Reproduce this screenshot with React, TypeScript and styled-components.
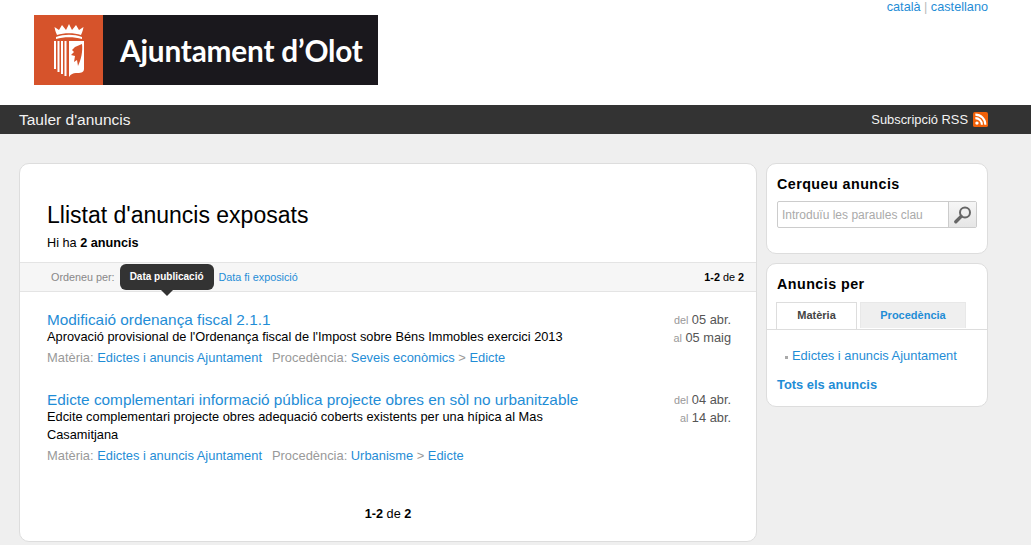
import React from 'react';
import styled, { createGlobalStyle } from 'styled-components';

const GlobalStyle = createGlobalStyle`
  html, body {
    margin: 0;
    padding: 0;
    background: #efefef;
    font-family: "Liberation Sans", Arial, sans-serif;
    font-size: 12px;
    color: #000;
    overflow: hidden;
  }
  a { color: #1f8dd6; text-decoration: none; }
`;

const announcements = [
  {
    title: 'Modificaió ordenança fiscal 2.1.1',
    text: "Aprovació provisional de l'Ordenança fiscal de l'Impost sobre Béns Immobles exercici 2013",
    from: '05 abr.',
    to: '05 maig',
    origin: ['Seveis econòmics', 'Edicte'],
  },
  {
    title: 'Edicte complementari informació pública projecte obres en sòl no urbanitzable',
    text: 'Edcite complementari projecte obres adequació coberts existents per una hípica al Mas Casamitjana',
    from: '04 abr.',
    to: '14 abr.',
    origin: ['Urbanisme', 'Edicte'],
  },
];

const Crest = () => (
  <svg width="32" height="54" viewBox="0 0 32 54" fill="#fff">
    <path d="M4 12C2 8 2 6 1.5 4L6 7l3-5 4 5 3-6 3 6 4-5 3 5 4.500-3C30 6 30 8 28 12 21 9.500 11 9.500 4 12z" />
    <path d="M3 14c8-3 18-3 26 0v2c-8-2.500-18-2.500-26 0z" />
    <path d="M1 18h2v28H1zM4.500 18h2v31h-2zM8 18h2v33H8zM11.500 18h2v35h-2z" />
    <path
      fillRule="evenodd"
      d="M16 18h15v28c0 4-4 4-8 4-3 0-5 1-7 4zM22 24l7-3c1 7-1 16-4 22l-1-6-3 2 1-6-4-1 3-3-2-2z"
    />
  </svg>
);

const App = () => (
  <>
    <GlobalStyle />
    <Header>
      <Logo>
        <LogoMark>
          <Crest />
        </LogoMark>
        <LogoName>Ajuntament d’Olot</LogoName>
      </Logo>
      <Languages>
        <a href="#ca">català</a>
        <LangSep>|</LangSep>
        <a href="#es">castellano</a>
      </Languages>
    </Header>

    <NavBar>
      <NavTitle>Tauler d'anuncis</NavTitle>
      <RssLink>
        Subscripció RSS
        <RssIcon viewBox="0 0 16 16">
          <rect width="16" height="16" rx="2" fill="#f26109" />
          <circle cx="4.2" cy="11.8" r="1.8" fill="#fff" />
          <path d="M2.5 6.5a7 7 0 0 1 7 7M2.5 2.8a10.7 10.7 0 0 1 10.7 10.7" fill="none" stroke="#fff" strokeWidth="2.2" />
        </RssIcon>
      </RssLink>
    </NavBar>

    <Page>
      <MainCard>
        <Intro>
          <PageTitle>Llistat d'anuncis exposats</PageTitle>
          <Count>
            Hi ha <b>2 anuncis</b>
          </Count>
        </Intro>

        <SortBar>
          <SortLabel>Ordeneu per:</SortLabel>
          <ActiveSort>Data publicació</ActiveSort>
          <SortLink href="#fi">Data fi exposició</SortLink>
          <SortPages>
            <b>1-2</b> de <b>2</b>
          </SortPages>
        </SortBar>

        <List>
          {announcements.map(item => (
            <Item key={item.title}>
              <ItemBody>
                <ItemTitle href="#item">{item.title}</ItemTitle>
                <ItemText>{item.text}</ItemText>
                <ItemMeta>
                  <MetaGroup>
                    Matèria: <a href="#m">Edictes i anuncis Ajuntament</a>
                  </MetaGroup>
                  <MetaGroup>
                    Procedència: <a href="#p">{item.origin[0]}</a> &gt; <a href="#p">{item.origin[1]}</a>
                  </MetaGroup>
                </ItemMeta>
              </ItemBody>
              <Dates>
                <DateRow>
                  <small>del</small> {item.from}
                </DateRow>
                <DateRow>
                  <small>al</small> {item.to}
                </DateRow>
              </Dates>
            </Item>
          ))}
        </List>

        <Pager>
          <b>1-2</b> de <b>2</b>
        </Pager>
      </MainCard>

      <Sidebar>
        <SearchCard>
          <SideTitle>Cerqueu anuncis</SideTitle>
          <SearchBox>
            <SearchInput placeholder="Introduïu les paraules clau" />
            <SearchButton>
              <svg width="20" height="20" viewBox="0 0 20 20">
                <circle cx="12" cy="7.6" r="5" fill="none" stroke="#666" strokeWidth="2" />
                <path d="M8.2 11.4L2.8 16.8" stroke="#666" strokeWidth="3.4" strokeLinecap="round" />
              </svg>
            </SearchButton>
          </SearchBox>
        </SearchCard>

        <TopicsCard>
          <TopicsHeading>
            <SideTitle>Anuncis per</SideTitle>
          </TopicsHeading>
          <Tabs>
            <Tab $active>Matèria</Tab>
            <Tab>Procedència</Tab>
          </Tabs>
          <TopicList>
            <TopicItem>
              <a href="#m">Edictes i anuncis Ajuntament</a>
            </TopicItem>
          </TopicList>
          <AllLink href="#all">Tots els anuncis</AllLink>
        </TopicsCard>
      </Sidebar>
    </Page>
  </>
);

const Header = styled.header`
  height: 105px;
  background: #fff;
  display: flex;
  justify-content: space-between;
  align-items: flex-start;
  padding: 0 43px 0 34px;
  box-sizing: border-box;
`;

const Logo = styled.div`
  width: 344px;
  height: 70px;
  margin-top: 15px;
  display: flex;
  background: #1a181d;
`;

const LogoMark = styled.div`
  width: 69px;
  background: #d6532b;
  display: flex;
  align-items: center;
  justify-content: center;
`;

const LogoName = styled.div`
  margin-left: 17px;
  align-self: center;
  color: #fff;
  font-family: Lato, sans-serif;
  font-weight: 700;
  font-size: 31px;
  letter-spacing: -0.2px;
  white-space: nowrap;
  transform: scaleX(0.96);
  transform-origin: left center;
`;

const Languages = styled.div`
  font-size: 12.7px;
  line-height: 14px;
  color: #bbb;
`;

const LangSep = styled.span`
  margin: 0 3.5px;
`;

const NavBar = styled.nav`
  height: 29px;
  background: #333;
  color: #fff;
  display: flex;
  align-items: center;
  justify-content: space-between;
  padding: 0 43px 0 19px;
`;

const NavTitle = styled.div`
  font-size: 15.5px;
  color: #f2f2f2;
`;

const RssLink = styled.div`
  display: flex;
  align-items: center;
  gap: 5px;
  font-size: 12.9px;
  color: #f2f2f2;
`;

const RssIcon = styled.svg`
  width: 15px;
  height: 15px;
`;

const Page = styled.div`
  display: flex;
  align-items: flex-start;
  gap: 9px;
  padding: 29px 0 0 19px;
`;

const Card = styled.section`
  background: #fff;
  border: 1px solid #ddd;
  border-radius: 10px;
  box-sizing: border-box;
`;

const MainCard = styled(Card)`
  width: 738px;
  height: 379px;
  display: flex;
  flex-direction: column;
`;

const Intro = styled.div`
  padding: 38px 27px 0;
  height: 98px;
  box-sizing: border-box;
`;

const PageTitle = styled.h1`
  margin: 0;
  font-size: 23px;
  font-weight: normal;
  line-height: 26px;
`;

const Count = styled.p`
  margin: 8px 0 0;
  font-size: 12.7px;
  line-height: 14px;
`;

const SortBar = styled.div`
  height: 30px;
  box-sizing: border-box;
  background: #f6f6f6;
  border-top: 1px solid #e4e4e4;
  border-bottom: 1px solid #e4e4e4;
  padding: 0 12px 0 31px;
  display: flex;
  align-items: center;
  font-size: 10.8px;
`;

const SortLabel = styled.span`
  color: #888;
  margin-right: 5px;
`;

const ActiveSort = styled.span`
  position: relative;
  background: #333;
  color: #fff;
  font-weight: bold;
  height: 26px;
  line-height: 26px;
  padding: 0 10px;
  border-radius: 6px;
  margin-right: 5px;
  font-size: 10px;

  &::after {
    content: '';
    position: absolute;
    left: 41px;
    bottom: -6px;
    border-left: 6px solid transparent;
    border-right: 6px solid transparent;
    border-top: 6px solid #333;
  }
`;

const SortLink = styled.a``;

const SortPages = styled.span`
  margin-left: auto;
`;

const List = styled.div`
  padding: 19px 25px 0 27px;
  display: flex;
  flex-direction: column;
  gap: 25px;
`;

const Item = styled.article`
  display: flex;
  justify-content: space-between;
`;

const ItemBody = styled.div`
  width: 540px;
`;

const ItemTitle = styled.a`
  display: block;
  font-size: 15.35px;
  line-height: 17px;
  white-space: nowrap;
`;

const ItemText = styled.p`
  margin: 0;
  font-size: 12.8px;
  line-height: 18px;
`;

const ItemMeta = styled.div`
  margin-top: 3px;
  color: #999;
  font-size: 12.9px;
  line-height: 17px;
  display: flex;
  gap: 10px;
`;

const MetaGroup = styled.span``;

const Dates = styled.div`
  text-align: right;
  font-size: 12.8px;
  color: #555;
  line-height: 18px;
`;

const DateRow = styled.div`
  small {
    font-size: 10.8px;
    color: #999;
  }
`;

const Pager = styled.div`
  margin-top: auto;
  padding-bottom: 20px;
  text-align: center;
  font-size: 12.7px;
`;

const Sidebar = styled.aside`
  width: 222px;
  display: flex;
  flex-direction: column;
  gap: 9px;
`;

const SearchCard = styled(Card)`
  height: 91px;
  padding: 11px 10px 0;
`;

const SideTitle = styled.h2`
  margin: 0;
  font-size: 14.3px;
  line-height: 18px;
  letter-spacing: 0.45px;
  font-weight: bold;
`;

const TopicsHeading = styled.div`
  padding: 0 10px;
`;

const SearchBox = styled.div`
  margin-top: 8px;
  height: 27px;
  display: flex;
  border: 1px solid #ccc;
  border-radius: 2px;
  box-sizing: border-box;
`;

const SearchInput = styled.input`
  flex: 1;
  min-width: 0;
  border: 0;
  outline: 0;
  padding: 0 4px;
  font-family: "Liberation Sans", Arial, sans-serif;
  font-size: 12px;
  background: transparent;

  &::placeholder {
    color: #aaa;
    opacity: 1;
  }
`;

const SearchButton = styled.button`
  width: 28px;
  padding: 0;
  border: 0;
  border-left: 1px solid #ccc;
  background: linear-gradient(#f6f6f6, #e6e6e6);
  display: flex;
  align-items: center;
  justify-content: center;
`;

const TopicsCard = styled(Card)`
  height: 144px;
  padding-top: 11px;
`;

const Tabs = styled.div`
  margin-top: 9px;
  padding-left: 9px;
  display: flex;
  gap: 3px;
  height: 27px;
  border-bottom: 1px solid #ddd;
`;

const Tab = styled.div<{ $active?: boolean }>`
  width: ${p => (p.$active ? '81px' : '106px')};
  box-sizing: border-box;
  height: ${p => (p.$active ? '27px' : '26px')};
  margin-bottom: ${p => (p.$active ? '-1px' : '0')};
  border: 1px solid ${p => (p.$active ? '#ddd' : '#e8e8e8')};
  border-bottom: 0;
  background: ${p => (p.$active ? '#fff' : '#efefef')};
  color: ${p => (p.$active ? '#444' : '#1f8dd6')};
  font-size: 11px;
  font-weight: bold;
  line-height: 25px;
  text-align: center;
`;

const TopicList = styled.ul`
  list-style: none;
  margin: 18px 0 0;
  padding: 0 0 0 25px;
`;

const TopicItem = styled.li`
  position: relative;
  font-size: 12.9px;
  line-height: 16px;

  &::before {
    content: '';
    position: absolute;
    left: -7px;
    top: 8px;
    width: 3px;
    height: 3px;
    background: #aaa;
  }
`;

const AllLink = styled.a`
  display: block;
  margin: 13px 0 0 10px;
  font-size: 12.9px;
  font-weight: bold;
  line-height: 16px;
`;

export default App;
